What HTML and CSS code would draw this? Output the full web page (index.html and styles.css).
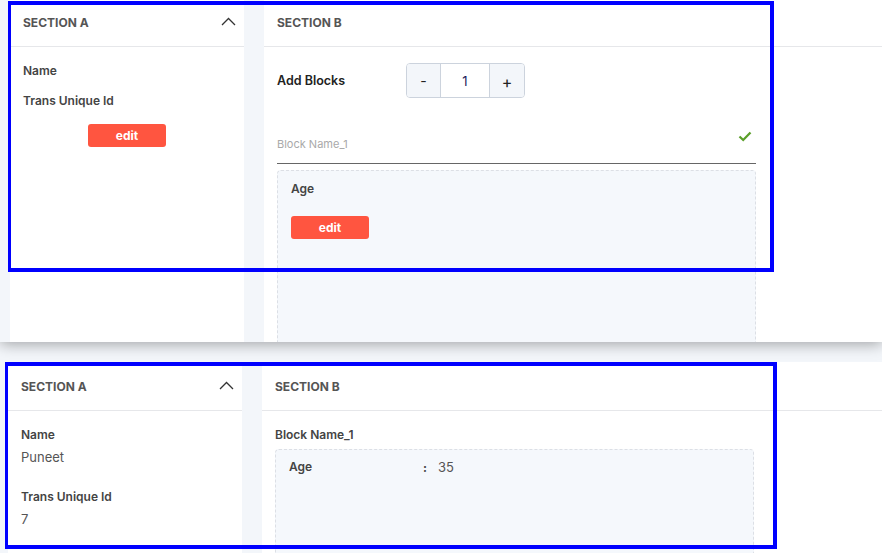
FILE: index.html
```html
<!DOCTYPE html>
<html lang="en">
<head>
  <meta charset="UTF-8" />
  <title>Blocks</title>
  <link rel="stylesheet" href="styles.css">
</head>
<body>

  <!-- Edit mode -->
  <div class="shot shot-edit">
    <div class="shot-row">
      <aside class="panel panel-a">
        <div class="panel-head">
          <span>SECTION A</span>
          <svg class="chevron" width="15" height="9" viewBox="0 0 15 9"><polyline points="1,8 7.5,1.5 14,8" fill="none" stroke="#333" stroke-width="1.3"/></svg>
        </div>
        <div class="panel-body">
          <div class="label">Name</div>
          <div class="label gap-edit">Trans Unique Id</div>
          <div class="center"><button class="btn-edit">edit</button></div>
        </div>
      </aside>

      <section class="panel panel-b">
        <div class="panel-head"><span>SECTION B</span></div>
        <div class="panel-body col">
          <div class="add-row">
            <span class="add-label">Add Blocks</span>
            <div class="counter">
              <span class="cnt-btn cnt-minus">-</span>
              <span class="cnt-val">1</span>
              <span class="cnt-btn cnt-plus">+</span>
            </div>
          </div>

          <div class="name-field">
            <span class="placeholder">Block Name_1</span>
            <svg class="check" width="14" height="11" viewBox="0 0 14 11"><path d="M1.5 5.5 L5.2 9 L12.5 1.5" fill="none" stroke="#5b9f2a" stroke-width="2.3"/></svg>
          </div>

          <div class="block block-edit">
            <div class="label">Age</div>
            <button class="btn-edit">edit</button>
          </div>
        </div>
      </section>
    </div>
  </div>

  <!-- View mode -->
  <div class="shot shot-view">
    <div class="shot-row">
      <aside class="panel panel-a">
        <div class="panel-head">
          <span>SECTION A</span>
          <svg class="chevron" width="15" height="9" viewBox="0 0 15 9"><polyline points="1,8 7.5,1.5 14,8" fill="none" stroke="#333" stroke-width="1.3"/></svg>
        </div>
        <div class="panel-body">
          <div class="field">
            <div class="label">Name</div>
            <div class="value">Puneet</div>
          </div>
          <div class="field">
            <div class="label">Trans Unique Id</div>
            <div class="value">7</div>
          </div>
        </div>
      </aside>

      <section class="panel panel-b">
        <div class="panel-head"><span>SECTION B</span></div>
        <div class="panel-body col">
          <div class="block-title">Block Name_1</div>
          <div class="block block-view">
            <div class="kv">
              <span class="label kv-key">Age</span>
              <span class="kv-sep">:</span>
              <span class="value">35</span>
            </div>
          </div>
        </div>
      </section>
    </div>
  </div>

  <!-- annotation boxes -->
  <div class="mark mark-top"></div>
  <div class="mark mark-bottom"></div>

</body>
</html>
```

FILE: styles.css
```css
body {
  margin: 0;
  height: 553px;
  overflow: hidden;
  position: relative;
  font-family: Inter, "Noto Sans", Arial, sans-serif;
  background-color: #f3f6fa;
  color: #444;
}

/* Screenshot frames */
.shot {
  background-color: #f3f6fa;
  overflow: hidden;
  position: relative;
}

.shot-edit {
  height: 342px;
  box-shadow: 0 2px 14px rgba(0, 0, 0, 0.35);
  z-index: 1;
}

.shot-edit .shot-row {
  margin-top: -2px;
  padding-left: 10px;
  height: 344px;
}

.shot-view {
  margin-top: 20px;
  height: 191px;
}

.shot-view .shot-row {
  padding-left: 8px;
  height: 191px;
}

.shot-row {
  display: flex;
  gap: 20px;
}

/* Panels */
.panel {
  background-color: white;
}

.panel-a {
  width: 234px;
  flex-shrink: 0;
}

.panel-b {
  flex: 1;
}

.panel-head {
  height: 48px;
  display: flex;
  align-items: center;
  justify-content: space-between;
  padding: 0 8px 0 13px;
  border-bottom: 1px solid #e6e7ea;
  font-size: 12px;
  font-weight: 700;
  color: #555;
}

.chevron {
  margin-top: -1px;
}

.panel-body {
  padding: 16px 13px 0;
}

.col {
  width: 479px;
}

.label {
  font-size: 12px;
  line-height: 16px;
  font-weight: 600;
  color: #444;
}

.value {
  font-size: 13px;
  line-height: 16px;
  color: #555;
  margin-top: 6px;
}

.field {
  margin-bottom: 24px;
}

.gap-edit {
  margin-top: 14px;
}

.center {
  text-align: center;
  margin-top: 15px;
}

.btn-edit {
  width: 78px;
  height: 23px;
  border: none;
  border-radius: 3px;
  background-color: #ff5540;
  color: white;
  font-family: inherit;
  font-size: 12px;
  font-weight: 700;
  padding: 0;
}

/* Add Blocks row */
.add-row {
  display: flex;
  align-items: center;
}

.add-label {
  width: 129px;
  font-size: 12.5px;
  font-weight: 600;
  color: #222;
}

.counter {
  display: flex;
  height: 33px;
  border: 1px solid #ccd3dd;
  border-radius: 4px;
  overflow: hidden;
}

.cnt-btn {
  display: flex;
  align-items: center;
  justify-content: center;
  background-color: #f3f6fa;
  font-size: 14px;
  color: #222;
}

.cnt-minus {
  width: 33px;
  border-right: 1px solid #ccd3dd;
}

.cnt-plus {
  width: 34px;
  border-left: 1px solid #ccd3dd;
  padding-top: 2px;
  font-size: 16px;
}

.cnt-val {
  width: 48px;
  display: flex;
  align-items: center;
  justify-content: center;
  font-size: 13px;
  color: #1c1c5a;
}

/* Block name input */
.name-field {
  margin-top: 28px;
  padding: 5px 4px 11px 0;
  display: flex;
  justify-content: space-between;
  align-items: flex-start;
  border-bottom: 1px solid #666;
}

.placeholder {
  margin-top: 5px;
  font-size: 11px;
  line-height: 16px;
  color: #a9a9a9;
}

/* Blocks */
.block {
  background-color: #f5f8fc;
  border: 1px dashed #dcdfe5;
  border-radius: 4px;
  padding: 10px 13px;
}

.block-edit {
  margin-top: 6px;
  height: 200px;
}

.block-edit .btn-edit {
  margin-top: 19px;
}

.block-title {
  font-size: 12px;
  line-height: 16px;
  font-weight: 600;
  color: #444;
}

.block-view {
  margin-top: 6px;
  height: 140px;
  padding-top: 9px;
}

.kv {
  display: flex;
  align-items: center;
}

.kv-key {
  width: 134px;
}

.kv-sep {
  width: 15px;
  font-size: 12px;
  font-weight: 700;
  color: #444;
}

.kv .value {
  margin-top: 0;
}

/* Blue annotation boxes */
.mark {
  position: absolute;
  border: 4px solid #0000ff;
  border-left-width: 3px;
  z-index: 5;
}

.mark-top {
  left: 8px;
  top: 1px;
  width: 759px;
  height: 263px;
}

.mark-bottom {
  left: 5px;
  top: 362px;
  width: 765px;
  height: 179px;
}
```
